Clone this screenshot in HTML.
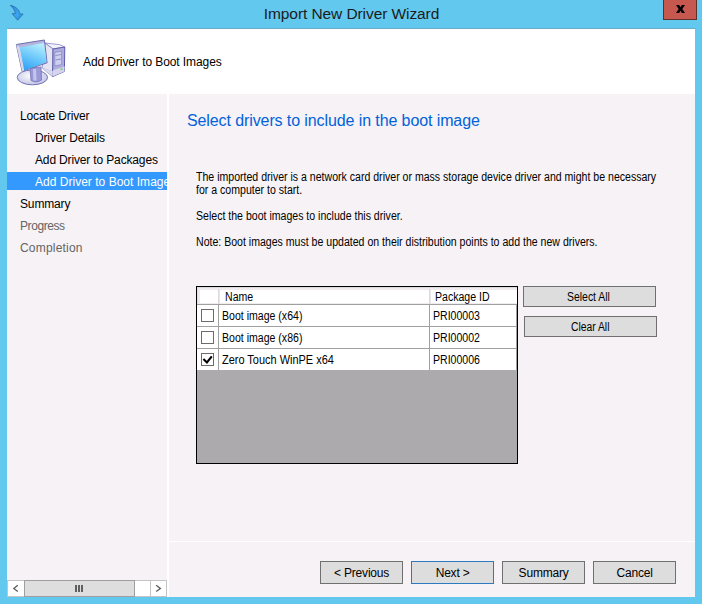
<!DOCTYPE html>
<html><head><meta charset="utf-8">
<style>
*{margin:0;padding:0;box-sizing:border-box}
html,body{width:702px;height:604px;overflow:hidden;background:#63c8ee;font-family:"Liberation Sans",sans-serif}
.a{position:absolute;white-space:nowrap}
#title{left:0;width:702px;top:4px;text-align:center;font-size:15.5px;line-height:20px;color:#1b1b1b;letter-spacing:-0.08px;text-indent:1px}
#close{left:663px;top:0;width:34px;height:20px;background:#c75850;border:1px solid #5e3029;border-top:none}
#client{left:7px;top:28px;width:688px;height:569px;background:#fff;border-top:1px solid #6aaacb}
#hdr{left:83px;top:55px;font-size:12px;line-height:14px;color:#000;letter-spacing:-0.08px}
#nav{left:7px;top:94px;width:160px;height:503px;background:#f6f2f6}
#gap{left:167px;top:94px;width:2px;height:503px;background:#fff}
#main{left:169px;top:94px;width:526px;height:447px;background:#f6f2f6}
#sep{left:169px;top:541px;width:526px;height:1px;background:#fff}
#foot{left:169px;top:542px;width:526px;height:55px;background:#f6f2f6}
.nv{font-size:12px;line-height:14px;color:#000;letter-spacing:-0.15px}
.dis{color:#646464}
#hl{left:7px;top:172px;width:160px;height:18px;background:#3399ff}
#h1{left:187px;top:112px;font-size:16px;line-height:18px;color:#0062da;letter-spacing:-0.1px}
.tx{font-size:12px;line-height:13px;color:#000;transform:scaleX(0.88);transform-origin:0 0}
#grid{left:196px;top:286px;width:322px;height:178px;background:#acaaac;border:1px solid #000}
.btn{position:absolute;background:#dddddd;border:1px solid #707070;font-size:11px;text-align:center;color:#000}
.bb{position:absolute;background:#dddddd;border:1px solid #707070;font-size:12px;text-align:center;color:#000;letter-spacing:-0.2px;text-indent:0.2px}
.cb{position:absolute;width:13px;height:13px;border:1px solid #6b6b6b;background:#fff}
.hc{position:absolute;background:#fff;border-top:1px solid #e8e8e8;border-left:1px solid #e8e8e8}
.gl{position:absolute;background:#a0a0a0}
.cell{position:absolute;font-size:12px;line-height:13px;color:#000;white-space:nowrap;transform:scaleX(0.88);transform-origin:0 0}
</style></head><body>
<div class="a" id="title">Import New Driver Wizard</div>
<svg class="a" style="left:0;top:0" width="30" height="26" viewBox="0 0 30 26">
<defs><linearGradient id="ag" x1="0" y1="0" x2="1" y2="1"><stop offset="0" stop-color="#2f86d6"/><stop offset="0.6" stop-color="#3aa6ee"/><stop offset="1" stop-color="#1f7fd2"/></linearGradient></defs>
<path d="M10.1 5.3 C14 6 18.5 8.5 19.6 12.5 L19.7 13.9 L23.2 14 L17.6 20.2 L12.1 13.7 L15.2 13.5 C15 10.5 13 7.5 10.1 5.3 Z" fill="url(#ag)" stroke="#2d6fae" stroke-width="0.8" stroke-linejoin="round"/>
</svg>
<div class="a" id="close"></div>
<svg class="a" style="left:670px;top:0" width="20" height="20" viewBox="0 0 20 20"><path d="M6 5 L9.2 5 L10.5 7.2 L11.8 5 L15 5 L12.3 9 L15 13 L11.8 13 L10.5 10.8 L9.2 13 L6 13 L8.7 9 Z" fill="#000"/></svg>
<div class="a" id="client"></div>
<svg class="a" style="left:12px;top:34px" width="58" height="56" viewBox="0 0 58 56">
<defs>
<linearGradient id="scr" x1="0.6" y1="0" x2="0.2" y2="1"><stop offset="0" stop-color="#b4ecff"/><stop offset="0.5" stop-color="#6cc8fa"/><stop offset="1" stop-color="#2ea0f4"/></linearGradient>
<linearGradient id="twr" x1="0" y1="0" x2="1" y2="0"><stop offset="0" stop-color="#f0f0fa"/><stop offset="1" stop-color="#b8b8e0"/></linearGradient>
<radialGradient id="bse" cx="0.45" cy="0.4" r="0.6"><stop offset="0" stop-color="#ffffff"/><stop offset="1" stop-color="#c4c4e4"/></radialGradient>
</defs>
<!-- tower -->
<path d="M33 9 L47.6 10.6 L52.8 13 L41 15 Z" fill="#f2f2fa" stroke="#8484c4" stroke-width="0.8" stroke-linejoin="round"/>
<path d="M33 9 L41 15 L40.6 42.6 L30 34 Z" fill="#e4e4f2" stroke="#7a7ac0" stroke-width="0.8" stroke-linejoin="round"/>
<path d="M41 15 L52.8 13 L52.4 37.4 L40.6 42.6 Z" fill="#acacdc" stroke="#5c5caa" stroke-width="1" stroke-linejoin="round"/>
<path d="M42.8 18.5 L49.6 17.2 L49.6 30.5 L42.8 32 Z" fill="#cfcff0" stroke="#7c7cc0" stroke-width="0.6"/>
<path d="M43.5 21.5 L49 20.5 M43.5 26 L49 25" stroke="#7070b4" stroke-width="0.7"/>
<path d="M30 34 L40.6 37.5 L52.6 33" fill="none" stroke="#c4c4e6" stroke-width="1"/>
<path d="M41 36.2 L52.5 32.4 L52.4 37.4 L40.6 42.6 Z" fill="#d4d4ee"/>
<path d="M30.4 34.4 L40.8 37.4 L40.6 42.2 L30.6 34.8 Z" fill="#d8d8ee"/>
<rect x="48.6" y="34.2" width="1.8" height="1.8" fill="#66dd55"/>
<!-- base -->
<ellipse cx="20.4" cy="43.4" rx="15.2" ry="7.4" fill="url(#bse)" stroke="#7474bc" stroke-width="1"/>
<path d="M18 34 L29 33 L29.5 46 Q24 49.5 19 46.5 Z" fill="#9a9ad8" stroke="#7070b8" stroke-width="0.8"/>
<path d="M21 35 L24 35 L24.5 46.5 L21.5 46.5 Z" fill="#c4c4ec"/>
<!-- monitor -->
<path d="M4.3 10.5 L32.4 6 L35.1 28.8 L10.1 37.3 Z" fill="#b4b4dc" stroke="#6c6cb0" stroke-width="1" stroke-linejoin="round"/>
<path d="M4.3 10.5 L7.8 13.6 L12.3 36.4 L10.1 37.3 Z" fill="#d8d8ec"/>
<path d="M7.8 13.6 L32 8.7 L34.7 28 L12.3 36.4 Z" fill="url(#scr)"/>
</svg>
<div class="a" id="hdr">Add Driver to Boot Images</div>
<div class="a" id="nav"></div>
<div class="a" id="gap"></div>
<div class="a" id="main"></div>
<div class="a" id="sep"></div>
<div class="a" id="foot"></div>
<div class="a" id="hl"></div>
<div class="a nv" style="left:20px;top:109px">Locate Driver</div>
<div class="a nv" style="left:35px;top:131px">Driver Details</div>
<div class="a nv" style="left:35px;top:153px">Add Driver to Packages</div>
<div class="a nv" style="left:35px;top:175px;color:#fff;width:132px;overflow:hidden;letter-spacing:0.02px">Add Driver to Boot Images</div>
<div class="a nv" style="left:20px;top:197px">Summary</div>
<div class="a nv dis" style="left:20px;top:219px;letter-spacing:-0.42px">Progress</div>
<div class="a nv dis" style="left:20px;top:241px;letter-spacing:0.2px">Completion</div>
<div class="a" id="h1">Select drivers to include in the boot image</div>
<div class="a tx" style="left:196px;top:171px">The imported driver is a network card driver or mass storage device driver and might be necessary<br>for a computer to start.</div>
<div class="a tx" style="left:196px;top:210px">Select the boot images to include this driver.</div>
<div class="a tx" style="left:196px;top:236px">Note: Boot images must be updated on their distribution points to add the new drivers.</div>

<!-- grid -->
<div class="a" id="grid"></div>
<div class="a" style="left:197px;top:287px;width:320px;height:17px;background:#efebef;border-top:1px solid #dadada;border-left:1px solid #e2e2e2"></div>
<div class="a" style="left:200px;top:290px;width:317px;height:13px;background:#fff"></div>
<div class="a" style="left:218px;top:289px;width:1px;height:15px;background:#dcd8dc"></div>
<div class="a" style="left:219px;top:289px;width:1px;height:15px;background:#e9e5e9"></div>
<div class="a" style="left:429px;top:289px;width:1px;height:15px;background:#dcd8dc"></div>
<div class="a" style="left:430px;top:289px;width:1px;height:15px;background:#e9e5e9"></div>
<div class="gl" style="left:197px;top:304px;width:320px;height:1px"></div>
<div class="a" style="left:197px;top:305px;width:320px;height:65px;background:#fff"></div>
<div class="gl" style="left:197px;top:326px;width:320px;height:1px"></div>
<div class="gl" style="left:197px;top:348px;width:320px;height:1px"></div>
<div class="gl" style="left:218px;top:305px;width:1px;height:65px"></div>
<div class="gl" style="left:429px;top:305px;width:1px;height:65px"></div>
<div class="gl" style="left:516px;top:305px;width:1px;height:65px"></div>
<div class="cell" style="left:225px;top:291px">Name</div>
<div class="cell" style="left:435px;top:291px">Package ID</div>
<div class="cb" style="left:201px;top:309px"></div>
<div class="cb" style="left:201px;top:331px"></div>
<div class="cb" style="left:201px;top:353px"></div>
<svg class="a" style="left:201px;top:353px" width="13" height="13" viewBox="0 0 13 13"><path d="M2.4 6.1 L5.9 9.4 L10.8 3.4" fill="none" stroke="#000" stroke-width="2.1"/></svg>
<div class="cell" style="left:222px;top:310px">Boot image (x64)</div>
<div class="cell" style="left:433px;top:310px">PRI00003</div>
<div class="cell" style="left:222px;top:332px">Boot image (x86)</div>
<div class="cell" style="left:433px;top:332px">PRI00002</div>
<div class="cell" style="left:222px;top:354px;transform:scaleX(0.913)">Zero Touch WinPE x64</div>
<div class="cell" style="left:433px;top:354px">PRI00006</div>

<div class="btn" style="left:523px;top:286px;width:133px;height:21px"></div>
<div class="cell" style="left:567px;top:291px;transform:scaleX(0.87)">Select All</div>
<div class="btn" style="left:524px;top:316px;width:133px;height:21px"></div>
<div class="cell" style="left:571px;top:321px;transform:scaleX(0.86)">Clear All</div>

<!-- scrollbar -->
<div class="a" style="left:7px;top:580px;width:160px;height:17px;background:#fff;border:1px solid #c4c4c4"></div>
<div class="a" style="left:24px;top:580px;width:111px;height:17px;background:#dedede;border:1px solid #a09ea0"></div>
<div class="a" style="left:150px;top:580px;width:1px;height:17px;background:#c4c4c4"></div>
<div class="a" style="left:75px;top:585px;width:2px;height:7px;background:#606060"></div>
<div class="a" style="left:78px;top:585px;width:2px;height:7px;background:#606060"></div>
<div class="a" style="left:81px;top:585px;width:2px;height:7px;background:#606060"></div>
<svg class="a" style="left:7px;top:580px" width="160" height="17" viewBox="0 0 160 17">
<path d="M10.8 5.3 L6.8 8.5 L10.8 11.6" fill="none" stroke="#5c5c5c" stroke-width="1.3"/>
<path d="M149.2 5.3 L153.4 8.5 L149.2 11.6" fill="none" stroke="#5c5c5c" stroke-width="1.3"/>
</svg>

<div class="bb" style="left:320px;top:561px;width:83px;height:23px;line-height:23px">&lt; Previous</div>
<div class="bb" style="left:411px;top:561px;width:83px;height:23px;line-height:23px;border-color:#2c7bc0">Next &gt;</div>
<div class="bb" style="left:502px;top:561px;width:83px;height:23px;line-height:23px">Summary</div>
<div class="bb" style="left:593px;top:561px;width:83px;height:23px;line-height:23px">Cancel</div>
</body></html>
